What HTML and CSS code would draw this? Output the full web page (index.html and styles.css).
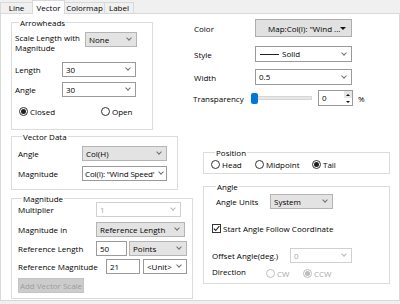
FILE: index.html
```html
<!DOCTYPE html>
<html>
<head>
<meta charset="utf-8">
<title>Vector</title>
<link rel="stylesheet" href="styles.css">
</head>
<body>
<div class="tabs">
  <div class="tab t-line">Line</div>
  <div class="tab t-vector active">Vector</div>
  <div class="tab t-colormap">Colormap</div>
  <div class="tab t-label">Label</div>
</div>
<div class="panel">
  <div class="col-left">
    <div class="group g-arrow">
      <div class="gtitle"><span>Arrowheads</span></div>
      <div class="row r-scale">
        <div class="lbl l-scale">Scale Length with<br>Magnitude</div>
        <div class="combo gray w52">None</div>
      </div>
      <div class="row r-len">
        <div class="lbl l-47">Length</div>
        <div class="combo w74">30</div>
      </div>
      <div class="row r-ang">
        <div class="lbl l-47">Angle</div>
        <div class="combo w74">30</div>
      </div>
      <div class="row r-radio">
        <div class="ritem ri-closed"><span class="rb on"></span>Closed</div>
        <div class="ritem"><span class="rb"></span>Open</div>
      </div>
    </div>

    <div class="group g-vd">
      <div class="gtitle"><span>Vector Data</span></div>
      <div class="row r-vd1">
        <div class="lbl l-64">Angle</div>
        <div class="combo gray w85">Col(H)</div>
      </div>
      <div class="row r-vd2">
        <div class="lbl l-64">Magnitude</div>
        <div class="combo w85 tight">Col(I): "Wind Speed'</div>
      </div>
    </div>

    <div class="group g-mag">
      <div class="gtitle"><span>Magnitude</span></div>
      <div class="row r-m1">
        <div class="lbl l-78">Multiplier</div>
        <div class="combo dis w85">1</div>
      </div>
      <div class="row r-m2">
        <div class="lbl l-78">Magnitude in</div>
        <div class="combo gray w89">Reference Length</div>
      </div>
      <div class="row r-m3">
        <div class="lbl l-78">Reference Length</div>
        <div class="input w31">50</div>
        <div class="combo gray w58 ml2">Points</div>
      </div>
      <div class="row r-m4">
        <div class="lbl l-88">Reference Magnitude</div>
        <div class="input w34">21</div>
        <div class="combo w44 ml3">&lt;Unit&gt;</div>
      </div>
      <button class="btn-dis" type="button">Add Vector Scale</button>
    </div>
  </div>

  <div class="col-right">
    <div class="row r-color">
      <div class="lbl l-62">Color</div>
      <div class="colorbtn"><span class="cb-text">Map:Col(I): "Wind ...</span><span class="tri-down"></span></div>
    </div>
    <div class="row r-style">
      <div class="lbl l-62">Style</div>
      <div class="combo tall w97"><span class="sline"></span>Solid</div>
    </div>
    <div class="row r-width">
      <div class="lbl l-62">Width</div>
      <div class="combo tall w97">0.5</div>
    </div>
    <div class="row r-trans">
      <div class="lbl l-58">Transparency</div>
      <div class="slider"><span class="thumb"></span><span class="track"></span></div>
      <div class="spin">
        <span class="spin-val">0</span>
        <span class="spin-btns"><span class="sb-up"></span><span class="sb-dn"></span></span>
      </div>
      <span class="pct">%</span>
    </div>

    <div class="group g-pos">
      <div class="gtitle"><span>Position</span></div>
      <div class="row r-pos">
        <div class="ritem ri-44"><span class="rb"></span>Head</div>
        <div class="ritem ri-57"><span class="rb"></span>Midpoint</div>
        <div class="ritem"><span class="rb on"></span>Tail</div>
      </div>
    </div>

    <div class="group g-angle">
      <div class="gtitle"><span>Angle</span></div>
      <div class="row r-a1">
        <div class="lbl l-54">Angle Units</div>
        <div class="combo gray w63">System</div>
      </div>
      <div class="row r-a2">
        <span class="cbx"><svg width="7" height="7" viewBox="0 0 7 7"><path d="M0.8 3.6 L2.7 5.5 L6.3 1.2" fill="none" stroke="#222" stroke-width="1.1"/></svg></span>
        <span class="cbx-label">Start Angle Follow Coordinate</span>
      </div>
      <div class="row r-a3">
        <div class="lbl l-78">Offset Angle(deg.)</div>
        <div class="combo dis w62">0</div>
      </div>
      <div class="row r-a4">
        <div class="lbl l-54">Direction</div>
        <div class="ritem ri-37 dis-t"><span class="rb dis"></span>CW</div>
        <div class="ritem dis-t"><span class="rb dis on"></span>CCW</div>
      </div>
    </div>
  </div>
</div>
</body>
</html>
```

FILE: styles.css
```css
html, body {
  margin: 0;
  padding: 0;
}
body {
  width: 400px;
  height: 304px;
  overflow: hidden;
  background: #f0f0f0;
  font-family: "Open Sans", "Noto Sans", sans-serif;
  font-size: 8px;
  color: #000;
}

/* tabs */
.tabs {
  display: flex;
  align-items: flex-end;
  height: 13px;
  position: relative;
  z-index: 1;
}
.tab {
  box-sizing: border-box;
  height: 11px;
  border: 1px solid #d9d9d9;
  border-bottom: none;
  border-right: none;
  background: #f0f0f0;
  text-align: center;
  line-height: 10px;
}
.t-line { width: 32px; }
.t-vector { width: 33px; }
.t-colormap { width: 39px; border-left: none; }
.t-label { width: 30px; border-right: 1px solid #d9d9d9; }
.tab.active {
  height: 14px;
  margin-bottom: -1px;
  background: #fff;
  border-right: 1px solid #d9d9d9;
  line-height: 13px;
}

/* panel */
.panel {
  box-sizing: border-box;
  height: 288px;
  border: 1px solid #d9d9d9;
  background: #fff;
  display: flex;
  padding-left: 10px;
}
.col-left {
  width: 182px;
  display: flex;
  flex-direction: column;
  align-items: flex-start;
}
.col-right {
  flex: 1;
  display: flex;
  flex-direction: column;
  align-items: flex-start;
}

/* group boxes */
.group {
  box-sizing: border-box;
  border: 1px solid #dcdcdc;
}
.gtitle {
  height: 0;
  padding-left: 4px;
}
.gtitle span {
  position: relative;
  top: -6px;
  display: inline-block;
  vertical-align: top;
  background: #fff;
  padding: 0 1px;
  line-height: 11px;
}

.row {
  display: flex;
  align-items: center;
}
.lbl {
  flex: none;
  white-space: nowrap;
}
.l-47 { width: 47px; }
.l-54 { width: 54px; }
.l-58 { width: 58px; }
.l-62 { width: 61px; padding-left: 1px; }
.l-64 { width: 64px; }
.l-78 { width: 78px; }
.l-88 { width: 88px; }

/* controls */
.combo, .input {
  position: relative;
  box-sizing: border-box;
  flex: none;
  height: 15px;
  border: 1px solid #9a9a9a;
  background: #fff;
  padding-left: 3px;
  line-height: 13px;
  white-space: nowrap;
  overflow: hidden;
}
.combo {
  padding-right: 10px;
}
.combo.tight {
  padding-left: 2px;
  padding-right: 0;
  letter-spacing: -0.15px;
}
.combo::after {
  content: "";
  position: absolute;
  right: 5px;
  top: 3px;
  width: 3px;
  height: 3px;
  border-right: 1px solid #707070;
  border-bottom: 1px solid #707070;
  transform: rotate(45deg);
}
.combo.tight::after {
  right: 3px;
}
.combo.gray {
  background: #e3e3e3;
  border-color: #b4b4b4;
}
.combo.dis {
  border-color: #d0d0d0;
  color: #a8a8a8;
}
.combo.dis::after {
  border-color: #b8b8b8;
}
.combo.tall {
  height: 16px;
  line-height: 14px;
  display: flex;
  align-items: center;
}
.combo.tall::after { top: 4px; }

.w31 { width: 31px; }
.w34 { width: 34px; }
.w44 { width: 44px; }
.w52 { width: 52px; }
.w58 { width: 58px; }
.w62 { width: 62px; }
.w63 { width: 63px; }
.w74 { width: 74px; }
.w85 { width: 85px; }
.w89 { width: 89px; }
.w97 { width: 97px; }
.ml2 { margin-left: 2px; }
.ml3 { margin-left: 3px; }

/* radios */
.ritem {
  display: flex;
  align-items: center;
  gap: 2px;
  flex: none;
  white-space: nowrap;
}
.rb {
  box-sizing: border-box;
  width: 9px;
  height: 9px;
  border: 1px solid #333;
  border-radius: 50%;
  background: #fff;
  display: flex;
  align-items: center;
  justify-content: center;
  flex: none;
}
.rb.on::after {
  content: "";
  width: 5px;
  height: 5px;
  border-radius: 50%;
  background: #1f1f1f;
}
.rb.dis { border-color: #bdbdbd; }
.rb.dis.on::after { background: #bdbdbd; }
.dis-t { color: #a8a8a8; }
.ri-closed { width: 82px; }
.ri-37 { width: 37px; }
.ri-44 { width: 44px; }
.ri-57 { width: 57px; }

/* Arrowheads */
.g-arrow {
  margin-top: 8px;
  width: 142px;
  height: 108px;
  padding-left: 3px;
}
.r-scale { margin-top: 9px; align-items: flex-start; }
.l-scale { width: 70px; line-height: 10px; margin-top: 1px; }
.r-len { margin-top: 9px; }
.r-ang { margin-top: 5px; }
.r-radio { margin-top: 9px; height: 11px; padding-left: 4px; }

/* Vector Data */
.g-vd {
  margin-top: 6px;
  width: 167px;
  height: 54px;
  padding-left: 6px;
}
.r-vd1 { margin-top: 9px; }
.r-vd2 { margin-top: 5px; }

/* Magnitude */
.g-mag {
  margin-top: 8px;
  width: 182px;
  height: 101px;
  padding-left: 6px;
}
.r-m1 { margin-top: 3px; }
.r-m2 { margin-top: 5px; }
.r-m3 { margin-top: 4px; }
.r-m4 { margin-top: 3px; }
.btn-dis {
  display: block;
  box-sizing: border-box;
  margin: 4px 0 0;
  width: 66px;
  height: 15px;
  padding: 0;
  border: 1px solid #c4c4c4;
  background: #cccccc;
  color: #9c9c9c;
  font: inherit;
  line-height: 13px;
  text-align: center;
}

/* right column */
.r-color { margin-top: 5px; }
.colorbtn {
  box-sizing: border-box;
  width: 97px;
  height: 18px;
  border: 1px solid #adadad;
  background: #e1e1e1;
  display: flex;
  align-items: center;
  padding-left: 12px;
}
.cb-text { flex: 1; white-space: nowrap; }
.tri-down {
  width: 0;
  height: 0;
  border-left: 3px solid transparent;
  border-right: 3px solid transparent;
  border-top: 3px solid #111;
  margin-right: 5px;
}
.r-style { margin-top: 9px; }
.sline {
  width: 19px;
  height: 1px;
  background: #222;
  margin: 0 3px 0 1px;
}
.r-width { margin-top: 7px; }
.r-trans { margin-top: 5px; height: 16px; }
.slider {
  width: 61px;
  display: flex;
  align-items: center;
}
.thumb {
  width: 7px;
  height: 11px;
  border-radius: 2px;
  background: #0078d7;
  flex: none;
}
.track {
  flex: 1;
  height: 2px;
  background: #e7e7e7;
  border: 1px solid #d6d6d6;
  border-left: none;
}
.spin {
  box-sizing: border-box;
  margin-left: 6px;
  width: 35px;
  height: 16px;
  border: 1px solid #9a9a9a;
  display: flex;
}
.spin-val {
  flex: 1;
  padding-left: 3px;
  line-height: 14px;
}
.spin-btns {
  width: 8px;
  display: flex;
  flex-direction: column;
}
.sb-up, .sb-dn {
  flex: 1;
  display: flex;
  align-items: center;
  justify-content: center;
}
.sb-up {
  background: #e6e6e6;
}
.sb-up::after {
  content: "";
  border-left: 2px solid transparent;
  border-right: 2px solid transparent;
  border-bottom: 2px solid #111;
}
.sb-dn::after {
  content: "";
  border-left: 2px solid transparent;
  border-right: 2px solid transparent;
  border-top: 2px solid #111;
}
.pct { margin-left: 5px; }

/* Position */
.g-pos {
  margin-top: 46px;
  margin-left: 10px;
  width: 187px;
  height: 22px;
  padding-left: 7px;
}
.r-pos { margin-top: 6px; height: 11px; }

/* Angle */
.g-angle {
  margin-top: 12px;
  margin-left: 10px;
  width: 187px;
  height: 98px;
  padding-left: 8px;
}
.r-a1 { margin-top: 7px; padding-left: 4px; }
.r-a2 { margin-top: 14px; height: 11px; gap: 2px; }
.cbx {
  box-sizing: border-box;
  width: 9px;
  height: 9px;
  border: 1px solid #333;
  background: #fff;
  display: flex;
  align-items: center;
  justify-content: center;
}
.cbx svg { display: block; }
.r-a3 { margin-top: 14px; }
.r-a4 { margin-top: 3px; height: 11px; }
.r-a4 .ritem { margin-top: 3px; }
```
